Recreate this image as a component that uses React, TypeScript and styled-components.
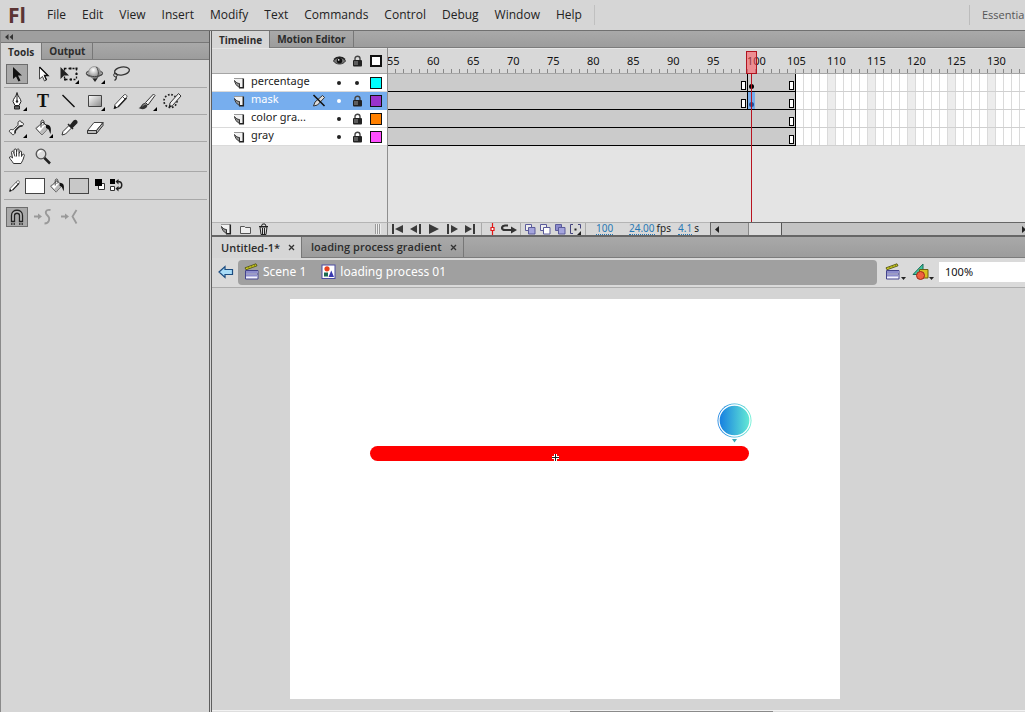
import React from "react";
import styled, { createGlobalStyle, css } from "styled-components";

const ui = `"Open Sans", "Noto Sans", sans-serif`;
const dense = `"Noto Sans", "Open Sans", sans-serif`;

const Global = createGlobalStyle`
  * { box-sizing: border-box; }
  body { margin: 0; background: #d6d6d6; color: #222; font-family: ${ui}; font-size: 12px; }
  button, input { font: inherit; color: inherit; border: 0; margin: 0; padding: 0; background: none; }
  svg { display: block; flex: none; }
`;

const Shell = styled.div`
  display: flex;
  flex-direction: column;
  min-height: 100vh;
  overflow: hidden;
`;

/* ---------- menu bar ---------- */
const MenuBar = styled.header`
  display: flex;
  align-items: center;
  height: 30px;
  padding-left: 8px;
`;
const Logo = styled.div`
  width: 39px;
  font: 700 21px/28px ${ui};
  color: #5b3434;
`;
const Menu = styled.nav`
  display: flex;
  gap: 16px;
  padding-right: 12px;
  border-right: 1px solid #c0c0c0;
`;
const MenuItem = styled.button`
  line-height: 20px;
  white-space: nowrap;
`;
const Workspace = styled.button`
  margin-left: auto;
  width: 56px;
  padding-left: 12px !important;
  border-left: 1px solid #bcbcbc !important;
  overflow: hidden;
  text-align: left;
  font-size: 11px !important;
  line-height: 20px;
  color: #555 !important;
`;

const Body = styled.div`
  flex: 1;
  display: flex;
  border-top: 1px solid #707070;
`;

/* ---------- tabs ---------- */
const TabStrip = styled.div<{ $h: number }>`
  display: flex;
  height: ${(p) => p.$h}px;
  background: linear-gradient(#a9a9a9, #9c9c9c);
  border-bottom: 1px solid #7c7c7c;
`;
const Tab = styled.button<{ $on?: boolean }>`
  display: flex;
  align-items: center;
  gap: 8px;
  padding: 0 7px !important;
  font-size: 10px !important;
  font-weight: 700 !important;
  line-height: 16px;
  white-space: nowrap;
  color: #2c2c2c !important;
  border-right: 1px solid #777 !important;
  ${(p) =>
    p.$on &&
    css`
      background: #d6d6d6 !important;
      margin-bottom: -1px;
    `}
`;
const DocTab = styled(Tab)`
  padding: 0 6px 0 9px !important;
  font-size: 11px !important;
  font-weight: 600 !important;
`;

/* ---------- tools ---------- */
const ToolsPanel = styled.aside`
  flex: none;
  width: 212px;
  border-left: 1px solid #8a8a8a;
  border-right: 3px double #5e5e5e;
  background: #d6d6d6;
`;
const CollapseBar = styled.div`
  display: flex;
  align-items: center;
  height: 12px;
  padding-left: 4px;
  background: #9f9f9f;
  border-bottom: 1px solid #777;
`;
const ToolRow = styled.div<{ $h: number; $last?: boolean }>`
  display: flex;
  align-items: center;
  height: ${(p) => p.$h}px;
  margin: 0 2px 0 3px;
  border-bottom: ${(p) => (p.$last ? 0 : 1)}px solid #a8a8a8;
`;
const ToolButton = styled.button<{ $on?: boolean }>`
  display: flex;
  align-items: center;
  justify-content: center;
  width: 22px;
  height: 20px;
  margin: 0 2px !important;
  ${(p) =>
    p.$on &&
    css`
      background: #a9a9a9 !important;
      border: 1px solid #6d6d6d !important;
    `}
`;
const ColourWell = styled.button<{ $c: string }>`
  width: 20px;
  height: 16px;
  background: ${(p) => p.$c} !important;
  border: 1px solid #444 !important;
`;
const ColourGroup = styled.div`
  display: flex;
  align-items: center;
  gap: 4px;
  padding-left: 4px;
`;

/* ---------- timeline ---------- */
const Main = styled.main`
  flex: 1;
  min-width: 0;
  display: flex;
  flex-direction: column;
`;
const Timeline = styled.section`
  display: grid;
  grid-template-columns: 176px minmax(0, 1fr);
  border-bottom: 2px solid #666;
`;
const LayerSide = styled.div`
  border-right: 1px solid #8e8e8e;
  background: #e4e4e4;
`;
const layerGrid = css`
  display: grid;
  grid-template-columns: 18px minmax(0, 1fr) 20px 20px 16px 22px;
  align-items: center;
  padding-left: 21px;
`;
const LayerHead = styled.div`
  ${layerGrid}
  height: 26px;
  background: #d8d8d8;
  border-top: 1px solid #e6e6e6;
  border-bottom: 1px solid #a5a5a5;
`;
const LayerRow = styled.div<{ $on?: boolean }>`
  ${layerGrid}
  height: 18px;
  background: ${(p) => (p.$on ? "#77aeee" : "#fff")};
  color: ${(p) => (p.$on ? "#fff" : "#222")};
  border-bottom: 1px solid ${(p) => (p.$on ? "#77aeee" : "#dadada")};
`;
const LayerName = styled.span`
  font: 11px/13px ${dense};
  padding-bottom: 4px;
  white-space: nowrap;
`;
const Cell = styled.span`
  display: flex;
  justify-content: center;
  color: inherit;
`;
const Dot = styled.i`
  width: 4px;
  height: 4px;
  border-radius: 2px;
  background: currentColor;
`;
const Swatch = styled.i<{ $c: string; $b?: number }>`
  width: 12px;
  height: 12px;
  border: ${(p) => p.$b || 1}px solid #111;
  background: ${(p) => p.$c};
`;
const FrameSide = styled.div`
  position: relative;
  overflow: hidden;
  background: #e4e4e4;
`;
const Ruler = styled.div`
  display: flex;
  height: 26px;
  border-top: 1px solid #e6e6e6;
  border-bottom: 1px solid #a5a5a5;
  background:
    repeating-linear-gradient(90deg, transparent 0 7px, #888 7px 8px) 0 100% / 100% 4px no-repeat,
    #d8d8d8;
`;
const RulerLabel = styled.span`
  flex: none;
  width: 40px;
  font: 11px/24px ${dense};
  color: #111;
  &:first-child {
    width: 39px;
    text-indent: -1px;
  }
`;
const FrameRow = styled.div`
  display: flex;
  height: 18px;
  border-bottom: 1px solid #d0d0d0;
  background:
    repeating-linear-gradient(90deg, transparent 0 7px, #dadada 7px 8px),
    repeating-linear-gradient(90deg, #fff 0 32px, #ececec 32px 40px);
  background-position: 408px 0, 408px 0;
`;
const Span = styled.div<{ $frames: number }>`
  flex: none;
  display: flex;
  align-items: flex-end;
  height: 18px;
  width: ${(p) => p.$frames * 8}px;
  padding-right: 1px;
  background: #cbcbcb;
  border-right: 1px solid #000;
  border-bottom: 1px solid #000;
`;
const EndMark = styled.i`
  width: 5px;
  height: 9px;
  margin: 0 0 1px auto;
  border: 1px solid #000;
  background: #fff;
`;
const KeyFrame = styled.i<{ $on?: boolean }>`
  display: flex;
  align-items: flex-end;
  justify-content: center;
  width: 7px;
  height: 17px;
  padding-bottom: 2px;
  background: ${(p) => (p.$on ? "#77aeee" : "none")};
  &::after {
    content: "";
    width: 5px;
    height: 5px;
    border-radius: 3px;
    background: ${(p) => (p.$on ? "#24509a" : "#000")};
  }
`;
const PlayHead = styled.div`
  position: absolute;
  top: 3px;
  bottom: 0;
  left: 359px;
  width: 9px;
  display: flex;
  flex-direction: column;
  align-items: center;
  &::before {
    content: "";
    width: 9px;
    height: 21px;
    border: 1px solid #b01420;
    background: rgba(255, 80, 90, 0.55);
  }
  &::after {
    content: "";
    flex: 1;
    width: 1px;
    background: #b81420;
  }
`;
const Spacer = styled.div`
  height: 76px;
`;
const Status = styled.div`
  display: flex;
  align-items: center;
  height: 13px;
  background: #d8d8d8;
  border-top: 1px solid #b4b4b4;
`;
const StatusSide = styled(Status)`
  border-right: 1px solid #8e8e8e;
`;
const StatusBar = styled(Status)`
  padding-left: 1px;
`;
const StatusButton = styled.button<{ $w: number }>`
  flex: none;
  display: flex;
  align-items: center;
  justify-content: center;
  width: ${(p) => p.$w}px;
  height: 12px;
`;
const Rule = styled.i`
  flex: none;
  width: 1px;
  height: 12px;
  margin: 0 2px;
  background: #aaa;
`;
const Grip = styled.i`
  width: 6px;
  height: 10px;
  margin: 0 6px 0 auto;
  background: repeating-linear-gradient(90deg, #999 0 1px, #eee 1px 2px);
`;
const Values = styled.div`
  flex: none;
  display: flex;
  padding-left: 8px;
`;
const Value = styled.span<{ $w: number }>`
  flex: none;
  display: flex;
  gap: 2px;
  width: ${(p) => p.$w}px;
  font: 10px/11px ${dense};
  button {
    height: 12px;
    color: #2878b4;
    border-bottom: 1px dotted #2878b4;
  }
`;
const ScrollBar = styled.div`
  flex: 1;
  display: flex;
  align-items: center;
  height: 13px;
  margin-top: -1px;
  background: #c3c3c3;
  border-top: 1px solid #666;
  border-left: 1px solid #666;
`;
const Thumb = styled.i`
  width: 34px;
  height: 12px;
  margin: 0 auto 0 26px;
  background: #dcdcdc;
  border-left: 1px solid #888;
  border-right: 1px solid #555;
`;

/* ---------- document ---------- */
const EditBar = styled.div`
  display: flex;
  align-items: center;
  height: 30px;
  padding: 0 0 1px 6px;
  background: #dadada;
  border-bottom: 1px solid #adadad;
`;
const Crumbs = styled.nav`
  flex: 1;
  display: flex;
  align-items: center;
  height: 25px;
  margin: 0 8px 0 4px;
  padding-left: 6px;
  background: #a0a0a0;
  border-radius: 4px;
`;
const Crumb = styled.a`
  display: flex;
  align-items: center;
  gap: 4px;
  margin-right: 15px;
  font: 12px/18px ${dense};
  color: #fff;
  text-decoration: none;
  white-space: nowrap;
`;
const BarButton = styled.button`
  width: 22px;
  margin-right: 5px !important;
`;
const BackButton = styled.button`
  width: 16px;
`;
const Zoom = styled.input`
  width: 86px;
  height: 20px;
  padding: 0 0 2px 6px !important;
  background: #fff !important;
  font: 11px/16px ${dense} !important;
  color: #111 !important;
`;
const Stage = styled.div`
  flex: 1;
  padding: 11px 0 11px 78px;
  background: #d4d4d4;
`;
const Canvas = styled.div`
  position: relative;
  width: 550px;
  height: 400px;
  background: #fff;
`;
const Progress = styled.div`
  position: absolute;
  left: 80px;
  top: 147px;
  width: 379px;
  height: 15px;
  border-radius: 8px;
  background: #f00;
`;
const Balloon = styled.svg`
  position: absolute;
  left: 427px;
  top: 104px;
`;
const Anchor = styled.svg`
  position: absolute;
  left: 261px;
  top: 154px;
`;
const StageScroll = styled.div`
  display: flex;
  height: 2px;
  background: #dedede;
  border-top: 1px solid #f2f2f2;
  &::before { content: ""; width: 44%; }
  &::after { content: ""; width: 25%; background: #8a8a8a; }
`;

/* ---------- icons ---------- */
const Corner = () => <path d="M21 20v-4l-4 4z" fill="#000" />;
const Art = ({ children }: { children: React.ReactNode }) => (
  <svg width="22" height="20" viewBox="0 0 22 20" fill="none">
    <defs>
      <linearGradient id="metal" x1="0" y1="0" x2="1" y2="1">
        <stop offset="0" stopColor="#fff" />
        <stop offset="1" stopColor="#888" />
      </linearGradient>
      <radialGradient id="ball" cx=".4" cy=".3" r=".7">
        <stop offset="0" stopColor="#fff" />
        <stop offset="1" stopColor="#777" />
      </radialGradient>
    </defs>
    {children}
  </svg>
);
const pencil = (
  <>
    <path d="M5 13.500L14 4c1.500-1.500 4 1 2.500 2.500L8 16l-3.500 1.500z" fill="#fff" stroke="#444" />
    <path d="M12.500 5.500l2.500 2.500" stroke="#444" />
    <path d="M8 16L16.500 7" stroke="#222" strokeWidth="1.400" />
  </>
);
const pencilTip = <path d="M3.500 18l1.300-3.500 2.200 2.200z" fill="#111" />;
const bucket = (
  <>
    <path d="M4 10.500L11 4l5.500 5.500L10 17z" fill="#fff" stroke="#333" />
    <path d="M10 17l6.500-7.500-3-2.500L7.500 14z" fill="#bbb" />
    <path d="M9 9.500V4c0-2.500 3-2.500 3 0v3" stroke="#333" />
    <path d="M3.500 10c2-1.500 5-3.500 8-3" stroke="#888" />
    <path d="M14 6.500c5 0 5.500 4 4.500 9.500-1.500-3-1-5-4.500-6z" fill="#111" />
  </>
);

const art: Record<string, React.ReactNode> = {
  select: <path d="M7 3v12l3-2.500 2.500 5 2-1-2.500-5h4z" fill="#111" />,
  subselect: (
    <>
      <path d="M7.500 3v12l3-2.500 2 4.500 2-1-2-4.500h3.500z" fill="#fff" stroke="#333" strokeWidth=".9" />
      <path d="M7.500 3l8.500 8.500h-3.500l2 4.500" stroke="#111" strokeWidth="1.300" />
    </>
  ),
  transform: (
    <>
      <path d="M6.500 4.500h12v11h-12z" stroke="#111" strokeWidth="1.300" strokeDasharray="2 2" />
      <path d="M2.500 3v12l3.500-3.500h5z" fill="#222" />
      <path d="M17.500 3.500h2v2h-2zM17.500 9h2v2h-2zM11.500 3.500h2v2h-2zM6 14.500h2v2H6zM12 14.500h2v2h-2z" fill="#111" />
      <Corner />
    </>
  ),
  rotate3d: (
    <>
      <path d="M16 7c5 2 2 5-5 5.500M5 7c-5 2-2 5 3 5.500" stroke="#555" strokeWidth="1.300" />
      <circle cx="10.500" cy="8.500" r="6" fill="url(#ball)" stroke="#888" strokeWidth=".7" />
      <path d="M3 10c3 3.500 12 3.500 15.500 0M12.500 3c2.500 4 2.500 8 0 12" stroke="#444" />
      <path d="M8.500 14.500h5L11 18z" fill="#222" />
      <Corner />
    </>
  ),
  lasso: (
    <>
      <ellipse cx="12" cy="7" rx="7.500" ry="4" stroke="#333" strokeWidth="1.300" transform="rotate(-10 12 7)" />
      <circle cx="5.500" cy="11" r="1.800" stroke="#333" />
      <path d="M6 12.500c1 2 0 3-1.500 4" stroke="#333" strokeWidth="1.300" />
    </>
  ),
  pen: (
    <>
      <path d="M11 1.500c-.5 4-4 6-4 9l2 4h4l2-4c0-3-3.500-5-4-9z" fill="#fff" stroke="#222" />
      <path d="M11 3v7" stroke="#222" />
      <path d="M8.500 15h5v3h-5z" stroke="#222" fill="#666" />
      <circle cx="11" cy="10.500" r="1.200" fill="#222" />
      <Corner />
    </>
  ),
  line: <path d="M4.500 4l12 12" stroke="#111" strokeWidth="1.400" />,
  rect: (
    <>
      <path d="M4.500 4.500h13v11h-13z" fill="url(#metal)" stroke="#444" />
      <Corner />
    </>
  ),
  pencil: (
    <>
      {pencil}
      {pencilTip}
    </>
  ),
  brush: (
    <>
      <path d="M9.500 11.500L17.500 3l1.500 1.500L12 14z" fill="#eee" stroke="#333" />
      <path d="M2.500 17c3-.5 3-5 6.500-5l2.500 2.500c-1 4-6 4.500-9 2.500z" fill="#333" />
      <path d="M6.500 15c1-1 1.500-1.500 3-1.500" stroke="#aaa" />
      <Corner />
    </>
  ),
  deco: (
    <>
      <circle cx="8.500" cy="10" r="6.500" stroke="#222" strokeWidth="1.700" strokeDasharray="1.700 1.700" />
      <path d="M8 12L16.500 2.500l2.500 2.500-8.500 9.500-3 1.500z" fill="#eee" stroke="#333" />
      <path d="M6.500 16.500l1-3 2.200 2z" fill="#222" />
    </>
  ),
  bone: (
    <>
      <path d="M12 6c-.5-3.500 3-4 3.200-1.700 3 .2 3 3.400.3 3.700-1.500 0-2 0-3 1L9.500 12c-.8 1-.7 1.500-.5 3-.8 2.500-3.500 2-3.500 0-3-.5-2.700-3.500 0-3.500 1.500.5 2 0 3-1l2.800-2.500c.8-.7.800-1 .7-2z" fill="#f4f4f4" stroke="#333" />
      <path d="M16.500 7.800c-2 .2-3 .5-4 1.500L9.700 12.200c-.7 1-.4 2-.5 3" stroke="#222" strokeWidth="1.400" />
      <Corner />
    </>
  ),
  bucket: (
    <>
      {bucket}
      <Corner />
    </>
  ),
  dropper: (
    <>
      <path d="M4 17l1-3.500 6-6 2.500 2.500-6 6z" fill="#fff" stroke="#333" />
      <path d="M10 6l5 5M12.500 7.500L16 3c2-1.500 4 1 2 2.500L14 9.500z" fill="#222" stroke="#222" strokeWidth="1.500" />
    </>
  ),
  eraser: (
    <>
      <path d="M3.500 12.500L10 4.500h9l-6.500 8z" fill="#fff" stroke="#444" />
      <path d="M3.500 12.500h9v3h-9zM12.500 12.500l6.500-8v3l-6.500 8z" fill="#bbb" stroke="#333" />
    </>
  ),
  hand: (
    <path d="M7.500 16.500C6 13.500 3 11.500 3.500 10c1-1 2 0 3 1L5.500 5.500c0-2 2-1.500 2.500 1V3c.5-1.500 2-1.500 2.500 0v2.500l.5-3c.5-1 2-1 2 .5v3.500l1-2c1-1 2 0 1.500 1.500v3.500l1-2c1.500-1 2.500.5 1.500 2-1 4-2 5-3 7zM8 6.500l1 3M10.500 5.500v4M13 6.500v3" fill="#fff" stroke="#333" />
  ),
  zoom: (
    <>
      <path d="M12 10.500l6 6" stroke="#222" strokeWidth="2.500" />
      <circle cx="9" cy="7" r="4.800" fill="#ddd" stroke="#555" strokeWidth="1.300" />
      <path d="M6.500 6.500c0-2 2-2.500 3-2.500" stroke="#fff" strokeWidth="1.300" />
    </>
  ),
  magnet: (
    <>
      <path d="M5.500 14.500V8.500c0-7 11-7 11 0v6h-3V8.500c0-3-5-3-5 0v6z" fill="#bbb" stroke="#222" strokeWidth="1.300" />
      <path d="M5 17h5M13 17h5" stroke="#222" strokeWidth="1.500" strokeDasharray="1.500 1" />
    </>
  ),
  smooth: (
    <>
      <path d="M2 9.500h5M18.500 3c-5-1-6 3-3 5.500s2 8-3 8" stroke="#999" strokeWidth="1.800" />
      <path d="M6 6.500l4 3-4 3z" fill="#999" />
    </>
  ),
  straighten: (
    <>
      <path d="M3 9.500h5M18.500 3l-4 6.500 4 7" stroke="#999" strokeWidth="1.800" />
      <path d="M7 6.500l4 3-4 3z" fill="#999" />
    </>
  ),
};

const TextGlyph = styled.span`
  font: 700 18px/20px "Liberation Serif", serif;
  color: #111;
`;

const Tool = ({ name, on }: { name: string; on?: boolean }) => (
  <ToolButton $on={on} aria-label={name}>
    {name === "text" ? <TextGlyph>T</TextGlyph> : <Art>{art[name]}</Art>}
  </ToolButton>
);

const Close = () => (
  <svg width="7" height="7" viewBox="0 0 7 7">
    <path d="M1 1l5 5M6 1L1 6" stroke="#333" strokeWidth="1.300" />
  </svg>
);
const Lock = () => (
  <svg width="11" height="12" viewBox="0 0 11 12">
    <path d="M3 6V3.500c0-3 5-3 5 0V6" fill="none" stroke="#444" strokeWidth="1.400" />
    <rect x="1" y="5" width="9" height="6.500" rx="1" fill="#222" />
    <path d="M2 7h4M2 9h4" stroke="#999" />
  </svg>
);
const Eye = () => (
  <svg width="13" height="10" viewBox="0 0 13 10">
    <path d="M.5 5C3 0 10 0 12.500 5 10 9 3 9 .5 5z" fill="#777" stroke="#333" />
    <path d="M1 3.500C4 .5 9 .5 12 3.500" fill="none" stroke="#222" strokeWidth="1.500" />
    <circle cx="6.500" cy="4.700" r="2.700" fill="#111" />
    <circle cx="5.700" cy="3.900" r=".8" fill="#fff" />
  </svg>
);
const LayerIcon = () => (
  <svg width="12" height="12" viewBox="0 0 12 12">
    <path d="M1 1.500h9v9.500H6.500z" fill="#f2f2f2" />
    <path d="M1 1.500h9" stroke="#999" />
    <path d="M10.300 1.500v9.200H6" fill="none" stroke="#222" strokeWidth="1.500" />
    <path d="M1.500 3.500c.5 3 2 5.500 5 7V6.500c-2 0-3.500-1-5-3z" fill="#999" stroke="#333" />
  </svg>
);
const NoEdit = () => (
  <svg width="14" height="13" viewBox="0 0 14 13">
    <path d="M1.500 12l1.500-4 7.500-6.500 2 2L5.500 11z" fill="#ddd" stroke="#333" />
    <path d="M1.500 1l11 11" stroke="#111" strokeWidth="1.600" />
  </svg>
);
const Play = ({ d }: { d: string }) => (
  <svg width="12" height="10" viewBox="0 0 12 10">
    <path d={d} fill="#3a3a3a" />
  </svg>
);
const playback: [string, string][] = [
  ["First frame", "M0 0h2v10H0zM11 1v8L3 5z"],
  ["Step back", "M7 1v8L0 5zM9 0h2v10H9z"],
  ["Play", "M1 0l10 5-10 5z"],
  ["Step forward", "M1 0h2v10H1zM5 1l7 4-7 4zM5 1z"],
  ["Last frame", "M1 1l7 4-7 4zM9 0h2v10H9z"],
];
const Onion = ({ a, b }: { a: string; b: string }) => (
  <svg width="11" height="11" viewBox="0 0 11 11" stroke="#5b5b9b">
    <path d="M.5.5h6v6h-6z" fill={a} />
    <path d="M3.500 3.500h6.500v6.500H3.500z" fill={b} />
  </svg>
);
const Clapper = ({ menu }: { menu?: boolean }) => (
  <svg width={menu ? 22 : 15} height="18" viewBox={menu ? "0 0 22 18" : "0 0 15 18"}>
    <path d="M1.500 7.500h12.500v8.500H1.500z" fill="#f4f4ff" stroke="#44448c" />
    <path d="M2 8h11.500v2H2zM2 12h11.500v1.500H2z" fill="#8c8ccc" />
    <path d="M1.500 11h12.500" stroke="#44448c" />
    <path d="M1 4.800L12 .8l1 2-11 4z" fill="#d4d420" stroke="#44440a" strokeWidth=".8" />
    <path d="M4.500 4l.8 1.500M7.500 3l.8 1.500M10.300 2l.8 1.500" stroke="#77771a" strokeWidth=".8" />
    {menu && <path d="M16 14h5l-2.500 3z" fill="#222" />}
  </svg>
);
const SymbolIcon = () => (
  <svg width="15" height="16" viewBox="0 0 15 16">
    <rect x="1" y="1" width="13" height="13.500" fill="#fff" stroke="#4a4aa0" />
    <circle cx="6" cy="4.800" r="2.600" fill="#e8401c" />
    <path d="M3 8.500h4v4H3z" fill="#1c6a50" />
    <path d="M7.500 13l2.800-6.500L13 13z" fill="#3838b0" />
  </svg>
);
const Shapes = () => (
  <svg width="22" height="18" viewBox="0 0 22 18">
    <path d="M1 11.500L11 1v10.500z" fill="#40c8a0" stroke="#1a6a5a" />
    <path d="M7.500 6.500h8.500v8.500H7.500z" fill="#d8c020" stroke="#6a6010" />
    <circle cx="8.500" cy="12.500" r="4" fill="#f06040" stroke="#a02818" />
    <path d="M17 14h5l-2.500 3z" fill="#222" />
  </svg>
);

/* ---------- data ---------- */
const menus = ["File", "Edit", "View", "Insert", "Modify", "Text", "Commands", "Control", "Debug", "Window", "Help"];
const layers = [
  { name: "percentage", colour: "#00ffff", locked: false, keyed: true },
  { name: "mask", colour: "#9933cc", locked: true, keyed: true, on: true },
  { name: "color gra...", colour: "#ff8000", locked: true, keyed: false },
  { name: "gray", colour: "#ff4fff", locked: true, keyed: false },
];
const marks = Array.from({ length: 16 }, (_, i) => 55 + i * 5);

export default function App() {
  return (
    <Shell>
      <Global />
      <MenuBar>
        <Logo>Fl</Logo>
        <Menu>
          {menus.map((m) => (
            <MenuItem key={m}>{m}</MenuItem>
          ))}
        </Menu>
        <Workspace>Essentia</Workspace>
      </MenuBar>
      <Body>
        <ToolsPanel>
          <CollapseBar>
            <svg width="8" height="6" viewBox="0 0 8 6">
              <path d="M3.500 0v6L0 3zM8 0v6L4.500 3z" fill="#333" />
            </svg>
          </CollapseBar>
          <TabStrip $h={17}>
            <Tab $on>Tools</Tab>
            <Tab>Output</Tab>
          </TabStrip>
          <ToolRow $h={28}>
            <Tool name="select" on />
            <Tool name="subselect" />
            <Tool name="transform" />
            <Tool name="rotate3d" />
            <Tool name="lasso" />
          </ToolRow>
          <ToolRow $h={27}>
            <Tool name="pen" />
            <Tool name="text" />
            <Tool name="line" />
            <Tool name="rect" />
            <Tool name="pencil" />
            <Tool name="brush" />
            <Tool name="deco" />
          </ToolRow>
          <ToolRow $h={27}>
            <Tool name="bone" />
            <Tool name="bucket" />
            <Tool name="dropper" />
            <Tool name="eraser" />
          </ToolRow>
          <ToolRow $h={30}>
            <Tool name="hand" />
            <Tool name="zoom" />
          </ToolRow>
          <ToolRow $h={28}>
            <ColourGroup>
              <svg width="13" height="14" viewBox="2 2 17 17" fill="none">
                {pencil}
                {pencilTip}
              </svg>
              <ColourWell $c="#fff" aria-label="Stroke colour" />
              <svg width="16" height="15" viewBox="2 1 18 17" fill="none">
                {bucket}
              </svg>
              <ColourWell $c="#c8c8c8" aria-label="Fill colour" />
              <svg width="36" height="14" viewBox="0 0 36 14">
                <path d="M5.500 4.500h6v6h-6z" fill="#fff" stroke="#333" />
                <path d="M2 0h7v7H2zM17 0h5v5h-5z" fill="#000" />
                <path d="M17.500 7.500h4v4h-4z" fill="#fff" stroke="#333" />
                <path d="M24 2.500h1c5 0 5 7 0 7h-1" fill="none" stroke="#222" strokeWidth="1.500" />
                <path d="M25.500 0v5.500L22.500 2.500zM25.500 7v5.500l-3-3z" fill="#222" />
              </svg>
            </ColourGroup>
          </ToolRow>
          <ToolRow $h={33} $last>
            <Tool name="magnet" on />
            <Tool name="smooth" />
            <Tool name="straighten" />
          </ToolRow>
        </ToolsPanel>
        <Main>
          <TabStrip $h={17}>
            <Tab $on>Timeline</Tab>
            <Tab>Motion Editor</Tab>
          </TabStrip>
          <Timeline>
            <LayerSide>
              <LayerHead>
                <span />
                <span />
                <span />
                <Cell><Eye /></Cell>
                <Cell><Lock /></Cell>
                <Cell><Swatch $c="#fff" $b={2} /></Cell>
              </LayerHead>
              {layers.map((l) => (
                <LayerRow key={l.name} $on={l.on}>
                  <LayerIcon />
                  <LayerName>{l.name}</LayerName>
                  <Cell>{l.on && <NoEdit />}</Cell>
                  <Cell><Dot /></Cell>
                  <Cell>{l.locked ? <Lock /> : <Dot />}</Cell>
                  <Cell><Swatch $c={l.colour} /></Cell>
                </LayerRow>
              ))}
            </LayerSide>
            <FrameSide>
              <Ruler>
                {marks.map((m) => (
                  <RulerLabel key={m}>{m}</RulerLabel>
                ))}
              </Ruler>
              {layers.map((l) => (
                <FrameRow key={l.name}>
                  {l.keyed && (
                    <Span $frames={45}>
                      <EndMark />
                    </Span>
                  )}
                  <Span $frames={l.keyed ? 6 : 51}>
                    {l.keyed && <KeyFrame $on={l.on} />}
                    <EndMark />
                  </Span>
                </FrameRow>
              ))}
              <Spacer />
              <PlayHead />
            </FrameSide>
            <StatusSide>
              <StatusButton $w={28} aria-label="New layer"><LayerIcon /></StatusButton>
              <StatusButton $w={10} aria-label="New folder">
                <svg width="11" height="9" viewBox="0 0 11 9">
                  <path d="M.5 8.500v-7h4l1 1h5v6z" fill="#eee" stroke="#555" />
                </svg>
              </StatusButton>
              <StatusButton $w={27} aria-label="Delete layer">
                <svg width="11" height="12" viewBox="0 0 11 12">
                  <path d="M2 4h7l-1 7.500H3zM4.500 5v6M6.500 5v6M1 3.500h9M3.500 3l1-2h2.500l1 2" fill="#ddd" stroke="#222" />
                </svg>
              </StatusButton>
              <Grip />
            </StatusSide>
            <StatusBar>
              {playback.map(([n, d]) => (
                <StatusButton key={n} $w={18} aria-label={n}><Play d={d} /></StatusButton>
              ))}
              <Rule />
              <StatusButton $w={16} aria-label="Centre frame">
                <svg width="5" height="12" viewBox="0 0 5 12">
                  <path d="M2.500 0v4M2.500 8v4M1 4.500h3v3H1z" fill="#fff" stroke="#e01818" strokeWidth="1.200" />
                </svg>
              </StatusButton>
              <StatusButton $w={18} aria-label="Loop">
                <svg width="16" height="10" viewBox="0 0 16 10">
                  <path d="M7 1.500H4C0 2 0 6 4 6h7" fill="none" stroke="#333" strokeWidth="2.200" />
                  <path d="M10 2.500l6 3.500-6 3.500z" fill="#333" />
                </svg>
              </StatusButton>
              <Rule />
              <StatusButton $w={15} aria-label="Onion skin"><Onion a="#eee" b="#a4a4dc" /></StatusButton>
              <StatusButton $w={15} aria-label="Onion skin outlines"><Onion a="#eee" b="#fff" /></StatusButton>
              <StatusButton $w={15} aria-label="Edit multiple frames"><Onion a="#8c8ccc" b="#a4a4dc" /></StatusButton>
              <StatusButton $w={15} aria-label="Modify markers">
                <svg width="11" height="11" viewBox="0 0 11 11">
                  <path d="M3 .5H.5v9H3M8 .5h2.500v4" fill="none" stroke="#44447c" />
                  <path d="M4.500 4.500h2v2h-2zM11 7v4H7z" fill="#222" />
                </svg>
              </StatusButton>
              <Rule />
              <Values>
                <Value $w={33}><button>100</button></Value>
                <Value $w={49}><button>24.00</button>fps</Value>
                <Value $w={32}><button>4.1</button>s</Value>
              </Values>
              <ScrollBar>
                <StatusButton $w={11} aria-label="Scroll left">
                  <svg width="4" height="7" viewBox="0 0 4 7"><path d="M4 0v7L0 3.500z" fill="#222" /></svg>
                </StatusButton>
                <Thumb />
                <svg width="3" height="7" viewBox="0 0 3 7"><path d="M0 0v7l4-3.500z" fill="#222" /></svg>
              </ScrollBar>
            </StatusBar>
          </Timeline>
          <TabStrip $h={21}>
            <DocTab $on>Untitled-1* <Close /></DocTab>
            <DocTab>loading process gradient <Close /></DocTab>
          </TabStrip>
          <EditBar>
            <BackButton aria-label="Back">
              <svg width="16" height="14" viewBox="0 0 16 14">
                <path d="M1 7l6-5.500V4.500h7.500v5H7v3z" fill="#a8dcf8" stroke="#1c4c80" strokeWidth="1.200" />
              </svg>
            </BackButton>
            <Crumbs>
              <Crumb href="#scene"><Clapper />Scene 1</Crumb>
              <Crumb href="#symbol"><SymbolIcon />loading process 01</Crumb>
            </Crumbs>
            <BarButton aria-label="Edit scene"><Clapper menu /></BarButton>
            <BarButton aria-label="Edit symbols"><Shapes /></BarButton>
            <Zoom aria-label="Zoom" defaultValue="100%" />
          </EditBar>
          <Stage>
            <Canvas>
              <Progress />
              <Balloon width="35" height="40" viewBox="0 0 35 40">
                <defs>
                  <linearGradient id="sky">
                    <stop offset="0.100" stopColor="#1a84e0" />
                    <stop offset="1" stopColor="#68f0d4" />
                  </linearGradient>
                </defs>
                <circle cx="17.500" cy="17.500" r="17" fill="url(#sky)" />
                <circle cx="17.500" cy="17.500" r="15.500" fill="none" stroke="#fff" strokeWidth="1.300" />
                <path d="M15 36h5l-2.500 3.500z" fill="#3ba8b8" />
              </Balloon>
              <Anchor width="9" height="9" viewBox="0 0 9 9">
                <path d="M4.500 1v7M1 4.500h7" stroke="#fff" strokeWidth="3" />
                <path d="M4.500 1v7M1 4.500h7" stroke="#222" />
              </Anchor>
            </Canvas>
          </Stage>
          <StageScroll />
        </Main>
      </Body>
    </Shell>
  );
}
